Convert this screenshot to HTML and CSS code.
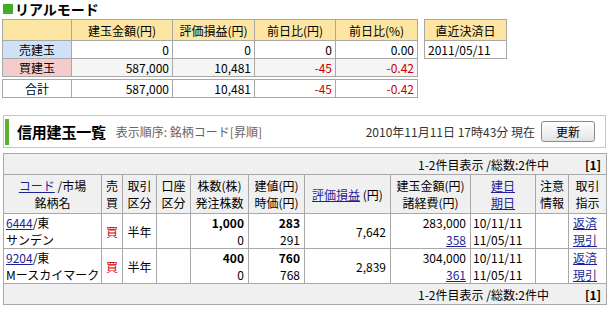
FILE: index.html
```html
<!DOCTYPE html>
<html lang="ja">
<head>
  <meta charset="UTF-8" />
  <title>信用建玉一覧</title>
  <link rel="stylesheet" href="styles.css">
</head>
<body>

  <h2 class="mode-title"><span class="mark"></span>リアルモード</h2>

  <div class="summary">
    <table class="sum-table">
      <colgroup>
        <col class="s-label"><col class="s-amount"><col class="s-profit"><col class="s-diff"><col class="s-rate">
      </colgroup>
      <tr class="head">
        <th></th>
        <th>建玉金額(円)</th>
        <th>評価損益(円)</th>
        <th>前日比(円)</th>
        <th>前日比(%)</th>
      </tr>
      <tr class="sell">
        <td class="label">売建玉</td>
        <td>0</td>
        <td>0</td>
        <td>0</td>
        <td>0.00</td>
      </tr>
      <tr class="buy">
        <td class="label">買建玉</td>
        <td>587,000</td>
        <td>10,481</td>
        <td class="minus">-45</td>
        <td class="minus">-0.42</td>
      </tr>
      <tr class="gap"><td colspan="5"></td></tr>
      <tr class="total">
        <td class="label">合計</td>
        <td>587,000</td>
        <td>10,481</td>
        <td class="minus">-45</td>
        <td class="minus">-0.42</td>
      </tr>
    </table>

    <table class="last-date">
      <tr><th>直近決済日</th></tr>
      <tr><td>2011/05/11</td></tr>
    </table>
  </div>

  <div class="section-head">
    <h3 class="section-title">信用建玉一覧</h3>
    <span class="sort-note">表示順序: 銘柄コード[昇順]</span>
    <span class="as-of">2010年11月11日 17時43分 現在</span>
    <button class="refresh">更新</button>
  </div>

  <table class="pos-table">
    <colgroup>
      <col class="c-code"><col class="c-side"><col class="c-term"><col class="c-acct">
      <col class="c-qty"><col class="c-price"><col class="c-profit"><col class="c-amount">
      <col class="c-date"><col class="c-note"><col class="c-order">
    </colgroup>
    <tr class="pager">
      <td colspan="11"><span>1-2件目表示 /総数:2件中</span><b class="page">[1]</b></td>
    </tr>
    <tr class="head">
      <th><a href="#">コード</a> /市場<br>銘柄名</th>
      <th>売<br>買</th>
      <th>取引<br>区分</th>
      <th>口座<br>区分</th>
      <th>株数(株)<br>発注株数</th>
      <th>建値(円)<br>時価(円)</th>
      <th><a href="#">評価損益</a> (円)</th>
      <th>建玉金額(円)<br>諸経費(円)</th>
      <th><a href="#">建日</a><br><a href="#">期日</a></th>
      <th>注意<br>情報</th>
      <th>取引<br>指示</th>
    </tr>
    <tr class="row">
      <td class="code"><a href="#">6444</a>/東<br>サンデン</td>
      <td class="side">買</td>
      <td class="term">半年</td>
      <td></td>
      <td class="num"><b>1,000</b><br>0</td>
      <td class="num"><b>283</b><br>291</td>
      <td class="num">7,642</td>
      <td class="num">283,000<br><a href="#">358</a></td>
      <td class="date">10/11/11<br>11/05/11</td>
      <td></td>
      <td class="order"><a href="#">返済</a><br><a href="#">現引</a></td>
    </tr>
    <tr class="row">
      <td class="code"><a href="#">9204</a>/東<br>Mースカイマーク</td>
      <td class="side">買</td>
      <td class="term">半年</td>
      <td></td>
      <td class="num"><b>400</b><br>0</td>
      <td class="num"><b>760</b><br>768</td>
      <td class="num">2,839</td>
      <td class="num">304,000<br><a href="#">361</a></td>
      <td class="date">10/11/11<br>11/05/11</td>
      <td></td>
      <td class="order"><a href="#">返済</a><br><a href="#">現引</a></td>
    </tr>
    <tr class="pager">
      <td colspan="11"><span>1-2件目表示 /総数:2件中</span><b class="page">[1]</b></td>
    </tr>
  </table>

</body>
</html>
```

FILE: styles.css
```css
:root {
  --line: #a8a8a8;
  --yellow: #fce6a2;
  --gray: #f0f0f0;
  --link: #1f1f99;
  --red: #cc0000;
}

* {
  box-sizing: border-box;
}

body {
  margin: 0;
  padding: 0 2px;
  font-family: "Noto Sans CJK JP", "Noto Sans", sans-serif;
  font-size: 12px;
  color: #000;
  background: #fff;
}

a {
  color: var(--link);
}

table {
  border-collapse: collapse;
  table-layout: fixed;
}

th, td {
  border: 1px solid var(--line);
  padding: 0 3px;
  font-weight: normal;
  white-space: nowrap;
}

/* real mode summary */

.mode-title {
  display: flex;
  align-items: center;
  gap: 2px;
  margin: 0;
  height: 18px;
  padding-left: 1px;
  font-size: 14px;
  font-weight: bold;
  line-height: 18px;
}

.mark {
  width: 10px;
  height: 10px;
  background: #3fae2a;
}

.summary {
  display: flex;
  align-items: flex-start;
  gap: 6px;
  margin-top: 1px;
}

.sum-table {
  width: 415px;
}

.s-label { width: 69px; }
.s-amount { width: 101px; }
.s-profit { width: 82px; }
.s-diff { width: 81px; }
.s-rate { width: 82px; }

.sum-table th,
.last-date th {
  height: 21px;
  background: var(--yellow);
  text-align: center;
  line-height: 17px;
}

.sum-table td {
  height: 18px;
  text-align: right;
  line-height: 17px;
}

.sum-table td.label {
  text-align: center;
}

.sell .label {
  background: #cfe0f7;
}

.buy .label {
  background: #f4cccc;
}

.buy td:not(.label) {
  background: #f5f5f5;
}

.sum-table .gap td {
  height: 3px;
  padding: 0;
  border-left: none;
  border-right: none;
}

.minus {
  color: var(--red);
}

.last-date {
  width: 83px;
}

.last-date td {
  height: 18px;
  line-height: 17px;
}

/* position list */

.section-head {
  display: flex;
  align-items: center;
  height: 33px;
  margin: 17px 1px 0;
  border: 1px solid #c4c4c4;
}

.section-head::before {
  content: "";
  width: 4px;
  height: 26px;
  margin-left: 1px;
  background: #5cb030;
}

.section-title {
  margin: 0 0 0 8px;
  font-size: 15px;
  font-weight: bold;
  letter-spacing: -0.2px;
}

.sort-note {
  margin-left: 10px;
  color: #666;
}

.as-of {
  margin-left: auto;
  color: #333;
}

.refresh {
  width: 54px;
  height: 21px;
  margin: 0 10px 0 6px;
  padding: 0;
  border: 1px solid #8a8a8a;
  border-radius: 3px;
  background: linear-gradient(#ffffff, #e4e4e4);
  font-family: inherit;
  font-size: 12px;
  color: #000;
}

.pos-table {
  width: 603px;
  margin: 5px 1px 0;
}

.c-code { width: 98px; }
.c-side { width: 21px; }
.c-term { width: 34px; }
.c-acct { width: 34px; }
.c-qty { width: 58px; }
.c-price { width: 56px; }
.c-profit { width: 86px; }
.c-amount { width: 80px; }
.c-date { width: 65px; }
.c-note { width: 33px; }
.c-order { width: 38px; }

.pager td {
  height: 21px;
  background: var(--gray);
  text-align: right;
  padding-right: 5px;
  line-height: 17px;
}

.page {
  margin-left: 36px;
}

.pos-table .head th {
  height: 39px;
  padding: 1px 1px;
  background: var(--gray);
  text-align: center;
  line-height: 17px;
}

.row td {
  height: 35px;
  padding: 0 2px;
  line-height: 17px;
  vertical-align: middle;
}

.row .code {
  text-align: left;
}

.row .side {
  color: var(--red);
  text-align: center;
  padding: 0;
}

.row .term {
  text-align: center;
}

.row .num {
  text-align: right;
  padding-right: 4px;
}

.row .date {
  text-align: left;
}

.row .order {
  text-align: left;
  padding-left: 4px;
}
```
